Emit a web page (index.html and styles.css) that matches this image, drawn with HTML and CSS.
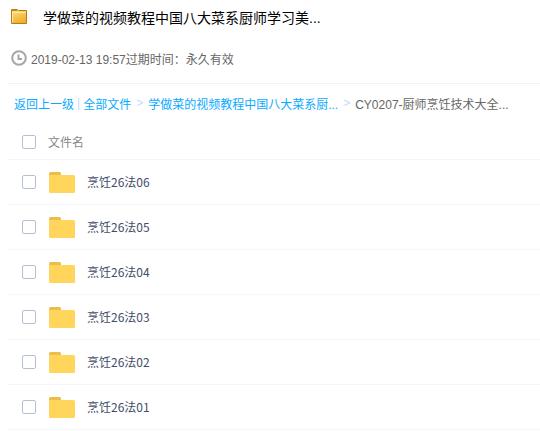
FILE: index.html
```html
<!DOCTYPE html>
<html lang="zh-CN">
<head>
  <meta charset="UTF-8" />
  <meta name="viewport" content="width=device-width, initial-scale=1.0" />
  <title>学做菜的视频教程中国八大菜系厨师学习美...</title>
  <link rel="stylesheet" href="styles.css">
</head>
<body>

  <main class="share">
    <header class="share-header">
      <div class="share-title">
        <svg class="title-icon" width="16" height="16" viewBox="0 0 16 16">
          <defs>
            <linearGradient id="gold" x1="0" y1="0" x2="0.4" y2="1">
              <stop offset="0" stop-color="#ffe083" />
              <stop offset="1" stop-color="#efb12c" />
            </linearGradient>
          </defs>
          <path d="M0.5 14.5V0.5H6.5L7.5 1.5H15.5V14.5Z" fill="url(#gold)" stroke="#b87a1c" />
          <path d="M1 1H6V2H1Z" fill="#c98d24" />
          <path d="M1.5 13.5V3.5H14.5" fill="none" stroke="#ffeaa5" />
        </svg>
        <h1>学做菜的视频教程中国八大菜系厨师学习美...</h1>
      </div>
      <div class="share-info">
        <svg width="16" height="16" viewBox="0 0 16 16" fill="none" stroke="#a6a6a6">
          <circle cx="8" cy="8" r="6.8" stroke-width="2" />
          <path d="M7.5 4.5V9H11" stroke-width="2" />
        </svg>
        <span>2019-02-13 19:57过期时间：永久有效</span>
      </div>
    </header>

    <nav class="crumbs">
      <a href="#">返回上一级</a>
      <span class="bar">|</span>
      <a href="#">全部文件</a>
      <span class="arrow">&gt;</span>
      <a href="#">学做菜的视频教程中国八大菜系厨...</a>
      <span class="arrow">&gt;</span>
      <span class="current">CY0207-厨师烹饪技术大全...</span>
    </nav>

    <table class="file-table">
      <thead>
        <tr>
          <th class="check"><input type="checkbox" id="checkAll" aria-label="全选"></th>
          <th colspan="2">文件名</th>
        </tr>
      </thead>
      <tbody id="fileList"></tbody>
    </table>
  </main>

  <script>
    const files = ["烹饪26法06", "烹饪26法05", "烹饪26法04", "烹饪26法03", "烹饪26法02", "烹饪26法01"];

    const folderIcon = `
      <svg width="26" height="21" viewBox="0 0 26 21">
        <path d="M0 5V1.5Q0 0 1.5 0H10.5Q12 0 12 1.5V5Z" fill="#edbd49" />
        <path d="M0 3H24.5Q26 3 26 4.5V19.5Q26 21 24.5 21H1.5Q0 21 0 19.5Z" fill="#ffd65b" />
      </svg>`;

    document.getElementById("fileList").innerHTML = files.map((name, i) => `
      <tr>
        <td class="check"><input type="checkbox" id="file${i}"></td>
        <td class="icon">${folderIcon}</td>
        <td><label for="file${i}">${name}</label></td>
      </tr>`).join("");

    document.getElementById("checkAll").onchange = function() {
      document.querySelectorAll("#fileList input").forEach(box => {
        box.checked = this.checked;
      });
    };
  </script>
</body>
</html>
```

FILE: styles.css
```css
* {
  margin: 0;
  padding: 0;
  box-sizing: border-box;
}

body {
  font-family: "Liberation Sans", "Noto Sans CJK SC", sans-serif;
  font-size: 12px;
  background: #fff;
  color: #666;
}

svg {
  display: block;
  flex: none;
}

.share {
  padding-left: 7px;
}

.share-header {
  padding-bottom: 3px;
  border-bottom: 1px solid #f2f2f2;
}

.share-title {
  display: flex;
  align-items: center;
  gap: 16px;
  height: 34px;
  padding-left: 4px;
}

.share-title h1 {
  font-size: 14px;
  font-weight: normal;
  color: #000;
}

.share-info {
  display: flex;
  align-items: center;
  gap: 4px;
  height: 46px;
  padding: 2px 0 0 4px;
}

.crumbs {
  display: flex;
  align-items: center;
  height: 40px;
  padding: 0 0 2px 7px;
  white-space: nowrap;
}

.crumbs a {
  color: #09aaff;
  text-decoration: none;
}

.crumbs a:hover {
  text-decoration: underline;
}

.bar {
  margin: 0 3px;
  color: #c4dbfe;
}

.arrow {
  margin: 0 5px;
  color: #c4dbfe;
}

.file-table {
  width: 100%;
  border-collapse: separate;
  border-spacing: 0;
}

.file-table th,
.file-table td {
  height: 45px;
  border-bottom: 1px solid #f2f6fd;
  text-align: left;
  vertical-align: middle;
}

.file-table th {
  height: 36px;
  font-weight: normal;
  color: #888;
}

.file-table td {
  font-family: "Noto Sans CJK SC", sans-serif;
  color: #424e67;
}

.file-table label {
  display: block;
  padding-bottom: 2px;
}

.file-table .check {
  width: 41px;
  padding-left: 15px;
}

.file-table .icon {
  width: 39px;
  padding-left: 1px;
}

input[type="checkbox"] {
  appearance: none;
  display: block;
  width: 14px;
  height: 14px;
  border: 1px solid #b4c0d2;
  border-radius: 2px;
  background: #fff;
  cursor: pointer;
}

input[type="checkbox"]:checked {
  background: #09aaff;
}
```
